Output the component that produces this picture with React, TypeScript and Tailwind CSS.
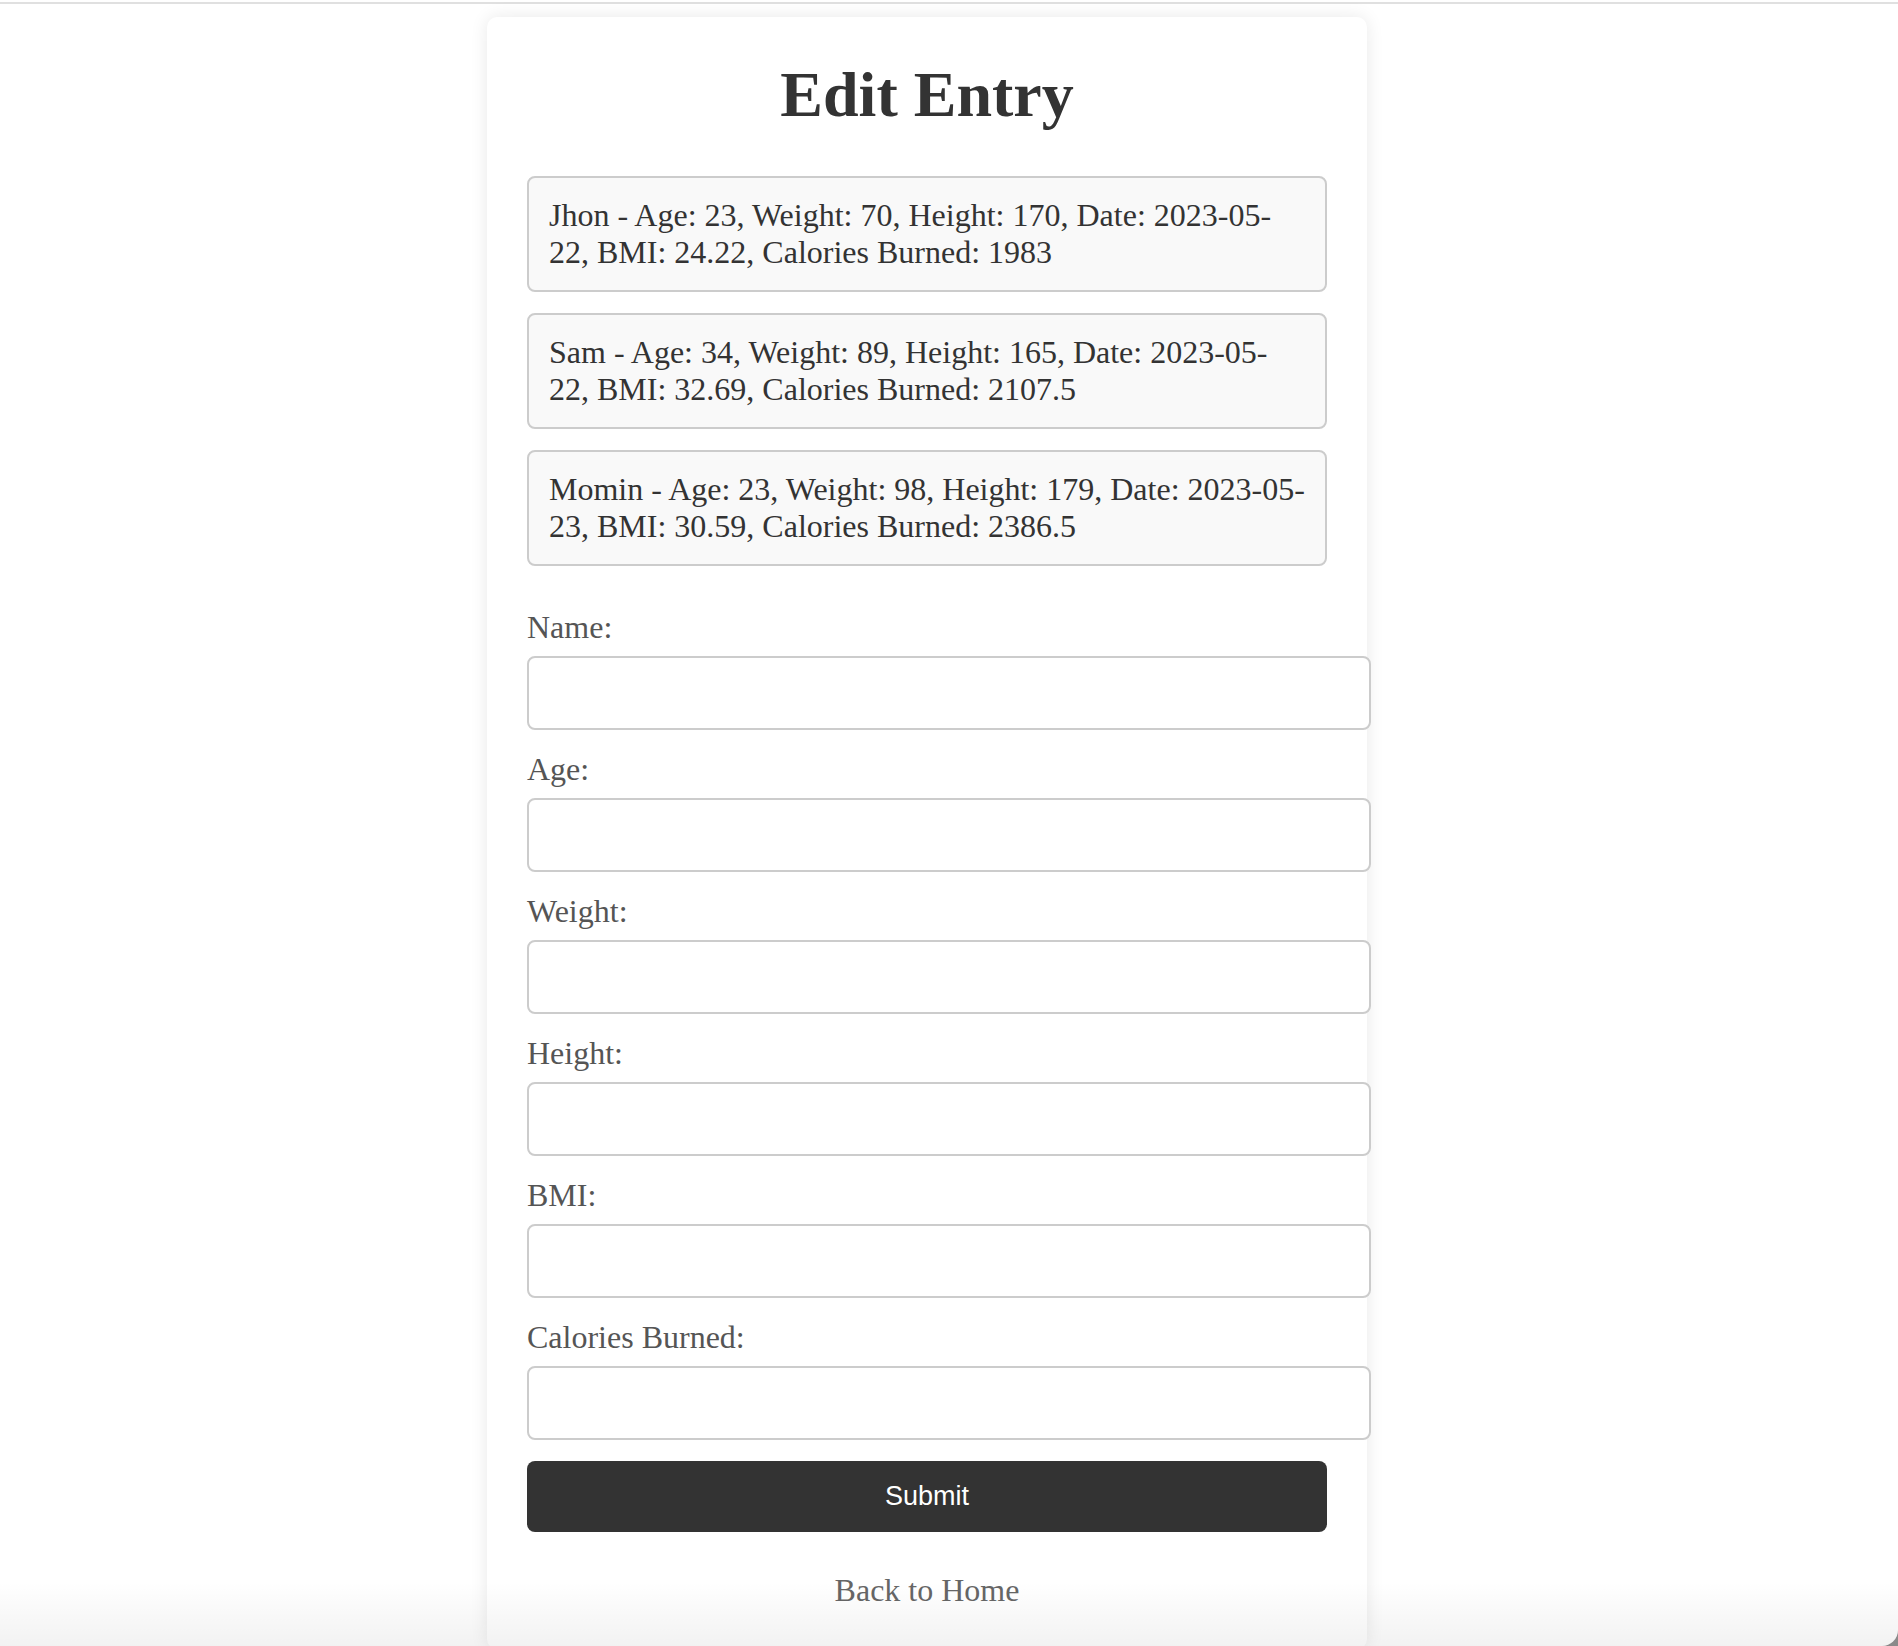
const ENTRIES = [
  "Jhon - Age: 23, Weight: 70, Height: 170, Date: 2023-05-22, BMI: 24.22, Calories Burned: 1983",
  "Sam - Age: 34, Weight: 89, Height: 165, Date: 2023-05-22, BMI: 32.69, Calories Burned: 2107.5",
  "Momin - Age: 23, Weight: 98, Height: 179, Date: 2023-05-23, BMI: 30.59, Calories Burned: 2386.5",
];

const FIELDS = ["Name", "Age", "Weight", "Height", "BMI", "Calories Burned"];

export default function App() {
  return (
    <div className="h-[1646px] w-full bg-[#8a8a8a]">
      <div className="relative h-full w-full overflow-hidden rounded-br-[16px] bg-white font-['Liberation_Serif',serif]">
        <div className="mt-[2px] h-[2px] w-full bg-[#e0e0e0]" />

        <div className="ml-[487px] mt-[13px] w-[880px] rounded-[10px] bg-white p-[40px] shadow-[0_0_18px_rgba(0,0,0,0.09)]">
          <h1 className="mt-[1px] mb-[44px] text-center text-[64px] font-bold leading-[74px] text-[#333]">
            Edit Entry
          </h1>

          <ul>
            {ENTRIES.map((entry) => (
              <li
                key={entry}
                className="mb-[21px] w-[800px] rounded-[8px] border-2 border-[#cccccc] bg-[#f9f9f9] px-[20px] py-[19px] text-[32px] leading-[37px] text-[#333]"
              >
                {entry}
              </li>
            ))}
          </ul>

          <form className="mt-[43px]" onSubmit={(e) => e.preventDefault()}>
            {FIELDS.map((field) => (
              <div key={field}>
                <label className="mb-[10px] block text-[32px] leading-[37px] text-[#555]">
                  {field}:
                </label>
                <input
                  type="text"
                  className="mb-[21px] block h-[74px] w-[844px] rounded-[8px] border-2 border-[#cccccc] bg-white px-[20px] text-[27px] outline-none"
                />
              </div>
            ))}
            <button
              type="submit"
              className="block h-[71px] w-[800px] rounded-[8px] bg-[#333] font-['Liberation_Sans',Arial,sans-serif] text-[27px] text-white"
            >
              Submit
            </button>
          </form>

          <div className="mt-[40px] text-center text-[32px] leading-[37px] text-[#666]">
            <a href="#">Back to Home</a>
          </div>
        </div>

        <div className="pointer-events-none absolute bottom-0 left-0 right-0 h-[64px] bg-gradient-to-b from-[rgba(0,0,0,0)] to-[rgba(0,0,0,0.05)]" />
      </div>
    </div>
  );
}
